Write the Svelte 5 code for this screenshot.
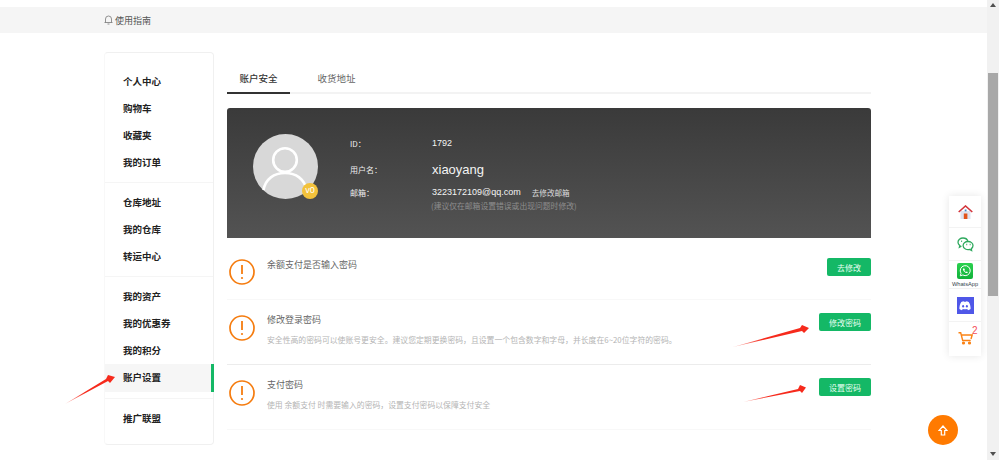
<script>
  const groups = [
    ['个人中心', '购物车', '收藏夹', '我的订单'],
    ['仓库地址', '我的仓库', '转运中心'],
    ['我的资产', '我的优惠券', '我的积分', '账户设置'],
    ['推广联盟']
  ];
  const rows = [
    { title: '余额支付是否输入密码', desc: '', btn: '去修改', cls: 'r1' },
    { title: '修改登录密码', desc: '安全性高的密码可以使账号更安全。建议您定期更换密码，且设置一个包含数字和字母，并长度在6~20位字符的密码。', btn: '修改密码', cls: 'r2' },
    { title: '支付密码', desc: '使用 余额支付 时需要输入的密码，设置支付密码以保障支付安全', btn: '设置密码', cls: 'r3' }
  ];
</script>

<div class="page">
  <div class="main">
    <div class="crumb">
      <div class="crumb-in">
        <svg width="9" height="10" viewBox="0 0 9 10"><path d="M1.500 7.500V4a3 3 0 0 1 6 0v3.500M.5 7.500h8M3.500 9h2" fill="none" stroke="#777" stroke-width=".8"/></svg>
        <span>使用指南</span>
      </div>
    </div>
    <div class="content">
      <nav class="side">
        {#each groups as g, i}
          <div class="group" class:last={i === 3}>
            {#each g as item}
              <div class="item" class:active={item === '账户设置'}>{item}</div>
            {/each}
          </div>
        {/each}
      </nav>
      <section class="right">
        <div class="tabs">
          <div class="tab on">账户安全</div>
          <div class="tab">收货地址</div>
        </div>
        <div class="hero">
          <div class="avatar">
            <svg width="65" height="65" viewBox="0 0 65 65">
              <circle cx="32.500" cy="32.500" r="32.500" fill="#d8d8d8"/>
              <circle cx="32" cy="26" r="11.800" fill="none" stroke="#fff" stroke-width="2.600"/>
              <path d="M10.500 56C12.500 45 21 39 32 39s19.500 6 21.500 17" fill="none" stroke="#fff" stroke-width="2.600"/>
            </svg>
            <span class="v0">v0</span>
          </div>
          <div class="info">
            <div class="line l1"><span class="k">ID：</span><span class="v">1792</span></div>
            <div class="line l2"><span class="k">用户名：</span><span class="v big">xiaoyang</span></div>
            <div class="line l3"><span class="k">邮箱：</span><span class="v">3223172109@qq.com</span><span class="edit">去修改邮箱</span></div>
            <div class="hint">(建议仅在邮箱设置错误或出现问题时修改)</div>
          </div>
        </div>
        {#each rows as r}
          <div class="row {r.cls}">
            <svg class="warn" width="26" height="26" viewBox="0 0 26 26">
              <circle cx="13" cy="13" r="12" fill="none" stroke="#f57c0f" stroke-width="1.700"/>
              <path d="M13 6v9" stroke="#f57c0f" stroke-width="1.800"/>
              <circle cx="13" cy="19" r="1.100" fill="#f57c0f"/>
            </svg>
            <div class="txt">
              <div class="t">{r.title}</div>
              {#if r.desc}<div class="d">{r.desc}</div>{/if}
            </div>
            <button class="btn">{r.btn}</button>
          </div>
        {/each}
      </section>
    </div>
  </div>

  <div class="scrollbar">
    <span class="up"></span>
    <span class="thumb"></span>
    <span class="down"></span>
  </div>

  <aside class="float">
    <div class="fi h32">
      <svg width="15" height="14" viewBox="0 0 15 14">
        <path d="M2.500 6h10v8h-10z" fill="#dfe3f0"/>
        <path d="M.7 7 7.500 1l6.800 6" fill="none" stroke="#d3353b" stroke-width="1.600"/>
        <rect x="5.800" y="8.500" width="3.600" height="5.500" fill="#e2541c"/>
        <rect x="6.700" y="4.500" width="1.800" height="1.800" fill="#3d87c9"/>
      </svg>
    </div>
    <div class="fi h33">
      <svg width="17" height="15" viewBox="0 0 17 15" fill="none" stroke="#2fa95e" stroke-width="1.300">
        <path d="M10.800 4C10.200 2.200 8.300 1 6 1 3.200 1 1 2.900 1 5.300c0 1.400.7 2.500 1.800 3.300l-.4 1.600 2-1"/>
        <path d="M11 4.500c2.800 0 5 1.800 5 4.100 0 1.200-.6 2.300-1.700 3l.3 1.900-1.900-1.100c-2.800.8-6.500-.6-6.600-3.700 0-2.300 2-4.200 4.900-4.200z"/>
        <path d="M9.300 7.500h.9M12.700 7.500h.9M4.200 4.300h.9" stroke-width="1.500"/>
      </svg>
    </div>
    <div class="fi h28 wa">
      <span class="wa-ic">
        <svg width="12" height="12" viewBox="0 0 12 12" fill="none" stroke="#fff">
          <path d="M1.300 10.800l.7-2.500A5 5 0 1 1 3.800 10z" stroke-width="1"/>
          <path d="M4 3.500c-.6 1.800 2 4.700 4.400 4.600l.4-1-1.200-.6-.6.5c-.7-.3-1.200-.9-1.600-1.600l.5-.6-.6-1.200z" fill="#fff" stroke="none"/>
        </svg>
      </span>
      <span class="wa-t">WhatsApp</span>
    </div>
    <div class="fi h33 dcw">
      <span class="dc">
        <svg width="12" height="10" viewBox="0 0 12 10">
          <path d="M2.300 1C3.200.5 4 .3 4.700.2l.3.6h2l.3-.6c.7.1 1.500.3 2.400.8C11 3 11.700 5.500 11.600 8c-.8.7-1.700 1.100-2.600 1.300l-.6-1-.3-.4c-1.400.5-2.800.5-4.200 0l-.3.4-.6 1C2.100 9.100 1.200 8.700.4 8 .3 5.500 1 3 2.300 1z" fill="#fff"/>
          <ellipse cx="4.100" cy="5.300" rx="1" ry="1.200" fill="#4f57e8"/>
          <ellipse cx="7.900" cy="5.300" rx="1" ry="1.200" fill="#4f57e8"/>
        </svg>
      </span>
    </div>
    <div class="fi h33 last">
      <svg width="15" height="13" viewBox="0 0 15 13" fill="none" stroke="#fa8215" stroke-width="1.400">
        <path d="M.5 .8h2.200l2 7.700h8M3.400 3h10.800l-1.200 4"/>
        <circle cx="5.500" cy="11" r=".9" fill="#fa8215"/>
        <circle cx="11.500" cy="11" r=".9" fill="#fa8215"/>
      </svg>
      <span class="badge">2</span>
    </div>
  </aside>

  <button class="top" aria-label="top">
    <svg width="10" height="11" viewBox="0 0 10 11" fill="none" stroke="#fff" stroke-width="1.200"><path d="M5 1 1 5.500h2.300V10h3.400V5.500H9z"/></svg>
  </button>

  <svg class="arrows" width="999" height="460" viewBox="0 0 999 460">
    <defs>
      <linearGradient id="fade" x1="0" y1="0" x2="1" y2="0">
        <stop offset="0" stop-color="#f62a1c" stop-opacity=".35"/>
        <stop offset=".4" stop-color="#f62a1c"/>
      </linearGradient>
    </defs>
    <path d="M65 404 106 379l2-4 7 2-5 6-2-2z" fill="url(#fade)"/>
    <path d="M733 347 800 328l2-3 7 3-5 5-2-2z" fill="url(#fade)"/>
    <path d="M743 402 798 389l2-4 6 2.500-4 5.500-2-2z" fill="url(#fade)"/>
  </svg>
</div>

<style>
  :global(body) { margin: 0; background: #fff; overflow: hidden; }
  .page {
    position: relative;
    width: 999px;
    height: 460px;
    overflow: hidden;
    display: flex;
    font-family: "Noto Sans CJK SC", "Liberation Sans", sans-serif;
  }
  .main { width: 987px; padding-top: 7px; }
  .crumb { height: 26px; background: #f5f5f5; display: flex; align-items: center; }
  .crumb-in { margin-left: 104px; display: flex; align-items: center; gap: 2px; font-size: 9px; color: #555; }
  .content { display: flex; margin: 19px 0 0 104px; align-items: flex-start; }
  .side {
    width: 110px;
    height: 393px;
    box-sizing: border-box;
    border: 1px solid #f0f0f0;
    border-left-color: #f8f8f8;
    border-radius: 4px;
    padding-top: 14.500px;
    flex: none;
  }
  .group { border-bottom: 1px solid #f5f5f5; padding: 0 0 6px; margin-bottom: 6px; }
  .group.last { border: 0; margin: 0; }
  .item {
    height: 27.100px;
    line-height: 27.100px;
    padding-left: 18px;
    font-size: 9.500px;
    font-weight: 700;
    color: #222;
    position: relative;
  }
  .item.active { background: #f6f6f6; margin-right: -1px; }
  .item.active::after {
    content: "";
    position: absolute;
    right: 0;
    top: 0;
    bottom: 0;
    width: 3px;
    background: #14b866;
  }
  .right { width: 644px; margin: 1px 0 0 13px; flex: none; }
  .tabs { display: flex; height: 41px; border-bottom: 2px solid #f3f3f3; box-sizing: border-box; }
  .tab {
    width: 63px;
    margin-right: 15px;
    height: 41px;
    box-sizing: border-box;
    text-align: center;
    line-height: 50px;
    font-size: 9.500px;
    color: #666;
  }
  .tab.on { color: #333; border-bottom: 2px solid #333; font-weight: 500; }
  .hero {
    margin-top: 14px;
    height: 130px;
    border-radius: 3px 3px 0 0;
    background: linear-gradient(#3a3a3a, #535353);
    display: flex;
    color: #eee;
    box-sizing: border-box;
    padding: 26px 0 0 26px;
  }
  .avatar { position: relative; width: 65px; height: 65px; }
  .avatar svg { display: block; }
  .v0 {
    position: absolute;
    right: 0;
    bottom: 0;
    width: 16px;
    height: 16px;
    border-radius: 50%;
    background: #f3c23b;
    color: #fff;
    font: 9px/15px "Liberation Sans", sans-serif;
    text-align: center;
  }
  .info { margin-left: 32px; margin-top: 2px; font-size: 8px; }
  .line { display: flex; align-items: center; }
  .k { width: 82px; flex: none; }
  .v { font-family: "Liberation Sans", sans-serif; font-size: 9px; color: #f4f4f4; }
  .big { font-size: 13px; }
  .l1 { height: 14px; }
  .l2 { height: 20px; margin-top: 9px; }
  .l3 { height: 14px; margin-top: 6px; }
  .edit { margin-left: 11px; color: #ddd; font-size: 7.600px; }
  .hint { margin: 1px 0 0 81px; color: #8e8e8e; font-size: 7.800px; line-height: 12px; }
  .row {
    display: flex;
    align-items: flex-start;
    box-sizing: border-box;
    border-bottom: 1px solid #f2f2f2;
    position: relative;
  }
  .r1 { height: 62px; padding: 21px 0 0 2px; border-bottom-color: #f8f8f8; }
  .r2 { height: 65px; padding: 15px 0 0 2px; border-bottom-color: #ececec; }
  .r3 { height: 65px; padding: 15px 0 0 2px; border-bottom-color: #f8f8f8; }
  .warn { flex: none; }
  .txt { margin-left: 12px; flex: 1; }
  .r1 .txt { margin-top: -1px; }
  .r2 .txt, .r3 .txt { margin-top: -2px; }
  .t { font-size: 9px; line-height: 14px; color: #666; }
  .d { font-size: 7.850px; line-height: 12px; margin-top: 7px; color: #b4b4b4; }
  .btn {
    flex: none;
    border: 0;
    border-radius: 2px;
    background: #14b866;
    color: #e8fff2;
    font-family: inherit;
    font-size: 8px;
    height: 18px;
    padding: 0;
    width: 52px;
    margin-top: -2px;
  }
  .r1 .btn { width: 44px; margin-top: -1px; }
  .scrollbar { width: 12px; background: #f1f1f1; position: relative; flex: none; }
  .thumb { position: absolute; left: 1px; width: 10px; top: 73px; height: 223px; background: #a8a8a8; }
  .up {
    position: absolute;
    left: 3px;
    top: 3px;
    border: 3px solid transparent;
    border-bottom: 4px solid #505050;
    border-top: 0;
  }
  .down {
    position: absolute;
    left: 3px;
    top: 452px;
    border: 3px solid transparent;
    border-top: 4px solid #505050;
    border-bottom: 0;
  }
  .float {
    position: absolute;
    left: 949px;
    top: 196px;
    width: 32px;
    height: 160px;
    background: #fff;
    box-shadow: 0 0 8px rgba(0, 0, 0, .1);
    display: flex;
    flex-direction: column;
  }
  .fi {
    display: flex;
    flex-direction: column;
    align-items: center;
    justify-content: center;
    box-sizing: border-box;
    border-bottom: 1px solid #f3f3f3;
    position: relative;
    flex: none;
  }
  .fi.last { border: 0; }
  .h32 { height: 32px; }
  .h33 { height: 33px; }
  .h28 { height: 28px; justify-content: flex-start; }
  .dcw { padding-top: 1px; }
  .wa-ic {
    width: 16px;
    height: 16px;
    border-radius: 2px;
    background: linear-gradient(#2bd14f, #10b13a);
    display: flex;
    align-items: center;
    justify-content: center;
    margin-top: 2px;
  }
  .wa-t { font: 5.700px/8px "Liberation Sans", sans-serif; color: #33444d; white-space: nowrap; margin-top: 1px; }
  .dc {
    width: 17px;
    height: 17px;
    background: #4f57e8;
    display: flex;
    align-items: center;
    justify-content: center;
  }
  .badge {
    position: absolute;
    left: 23px;
    top: 4px;
    color: #f4505a;
    font: 10px/10px "Liberation Sans", sans-serif;
  }
  .top {
    position: absolute;
    left: 928px;
    top: 415px;
    width: 30px;
    height: 30px;
    border: 0;
    padding: 0;
    border-radius: 50%;
    background: #ff7a00;
    display: flex;
    align-items: center;
    justify-content: center;
  }
  .arrows { position: absolute; left: 0; top: 0; pointer-events: none; }
</style>
